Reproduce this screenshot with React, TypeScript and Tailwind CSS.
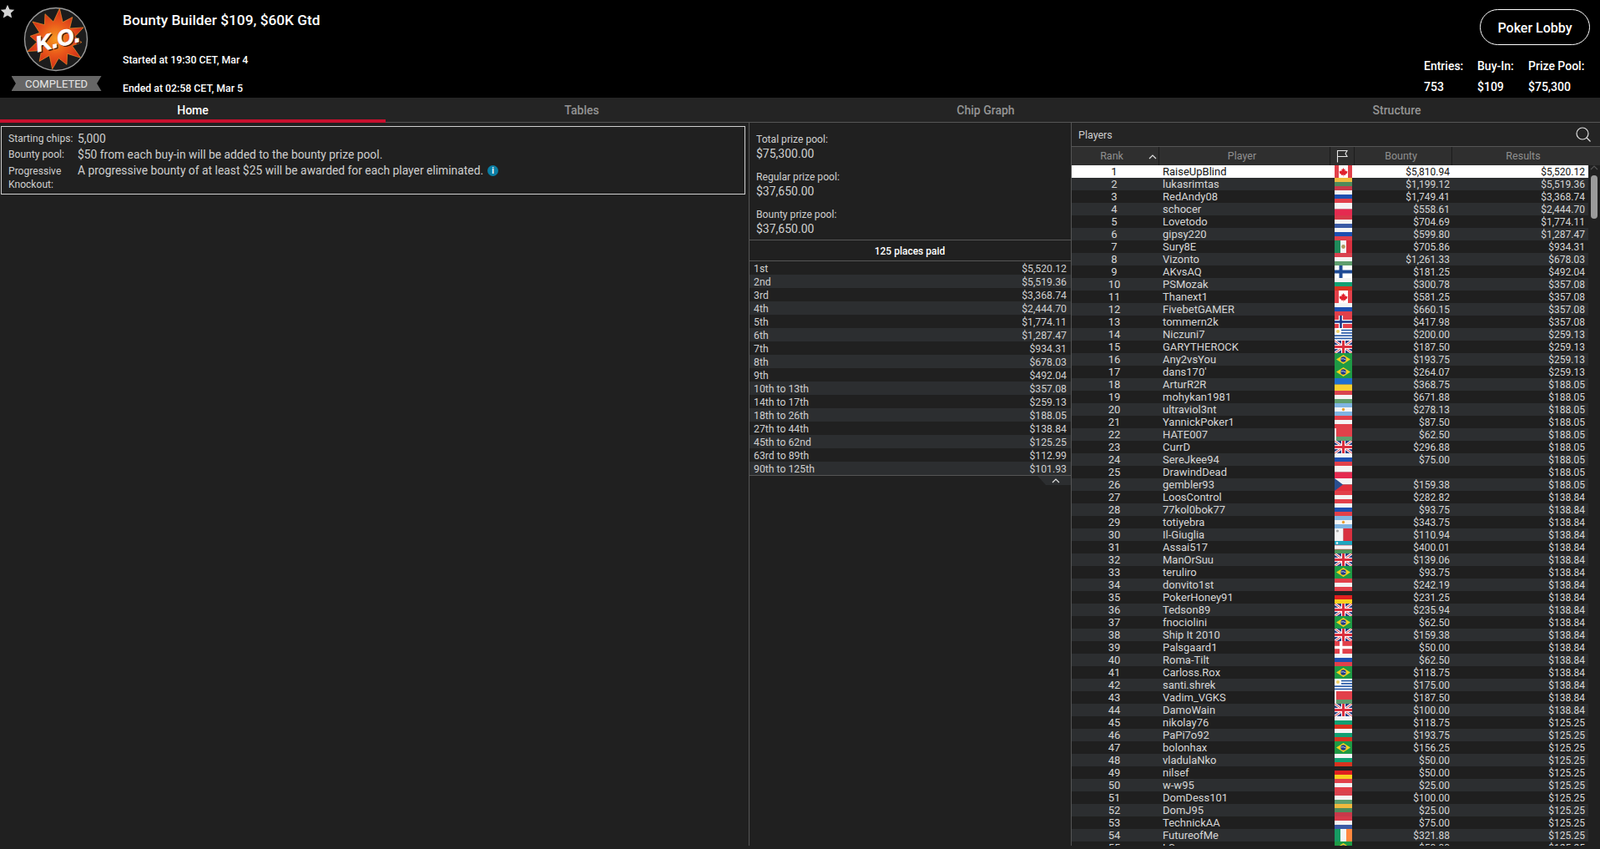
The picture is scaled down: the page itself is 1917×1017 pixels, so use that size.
import React from "react";

type Row = [string, string, string, string];
const rows: Row[] = [
  ["RaiseUpBlind","ca","$5,810.94","$5,520.12"],["lukasrimtas","lt","$1,199.12","$5,519.36"],["RedAndy08","ru","$1,749.41","$3,368.74"],["schocer","pl","$558.61","$2,444.70"],["Lovetodo","nl","$704.69","$1,774.11"],["gipsy220","ru","$599.80","$1,287.47"],["Sury8E","mx","$705.86","$934.31"],["Vizonto","hu","$1,261.33","$678.03"],["AKvsAQ","fi","$181.25","$492.04"],["PSMozak","bg","$300.78","$357.08"],["Thanext1","ca","$581.25","$357.08"],["FivebetGAMER","ru","$660.15","$357.08"],["tommern2k","no","$417.98","$357.08"],["Niczuni7","uy","$200.00","$259.13"],["GARYTHEROCK","gb","$187.50","$259.13"],["Any2vsYou","br","$193.75","$259.13"],["dans170'","br","$264.07","$259.13"],["ArturR2R","ua","$368.75","$188.05"],["mohykan1981","hu","$671.88","$188.05"],["ultraviol3nt","ar","$278.13","$188.05"],["YannickPoker1","at","$87.50","$188.05"],["HATE007","by","$62.50","$188.05"],["CurrD","gb","$296.88","$188.05"],["SereJkee94","ru","$75.00","$188.05"],["DrawindDead","pl","","$188.05"],["gembler93","cz","$159.38","$188.05"],["LoosControl","at","$282.82","$138.84"],["77kol0bok77","ru","$93.75","$138.84"],["totiyebra","ar","$343.75","$138.84"],["Il-Giuglia","mt","$110.94","$138.84"],["Assai517","uz","$400.01","$138.84"],["ManOrSuu","gb","$139.06","$138.84"],["teruliro","br","$93.75","$138.84"],["donvito1st","at","$242.19","$138.84"],["PokerHoney91","de","$231.25","$138.84"],["Tedson89","gb","$235.94","$138.84"],["fnociolini","br","$62.50","$138.84"],["Ship It 2010","gb","$159.38","$138.84"],["Palsgaard1","dk","$50.00","$138.84"],["Roma-Tilt","ru","$62.50","$138.84"],["Carloss.Rox","br","$118.75","$138.84"],["santi.shrek","uy","$175.00","$138.84"],["Vadim_VGKS","by","$187.50","$138.84"],["DamoWain","gb","$100.00","$138.84"],["nikolay76","bg","$118.75","$125.25"],["PaPi7o92","bg","$193.75","$125.25"],["bolonhax","br","$156.25","$125.25"],["vladulaNko","bg","$50.00","$125.25"],["nilsef","de","$50.00","$125.25"],["w-w95","at","$25.00","$125.25"],["DomDess101","hu","$100.00","$125.25"],["DomJ95","lt","$25.00","$125.25"],["TechnickAA","nl","$75.00","$125.25"],["FutureofMe","ie","$321.88","$125.25"],["LS","br","$50.00","$125.25"],
];

const prizes: [string, string][] = [
  ["1st","$5,520.12"],["2nd","$5,519.36"],["3rd","$3,368.74"],["4th","$2,444.70"],["5th","$1,774.11"],["6th","$1,287.47"],["7th","$934.31"],["8th","$678.03"],["9th","$492.04"],["10th to 13th","$357.08"],["14th to 17th","$259.13"],["18th to 26th","$188.05"],["27th to 44th","$138.84"],["45th to 62nd","$125.25"],["63rd to 89th","$112.99"],["90th to 125th","$101.93"],
];

const R = "#e2404a", W = "#f4f4f4", G = "#5f9e6e";

function stripes(colors: string[]) {
  const h = 15 / colors.length;
  return colors.map((c, i) => <rect key={i} x={0} y={i * h} width={21} height={h + 0.2} fill={c} />);
}
function vstripes(colors: string[]) {
  const w = 21 / colors.length;
  return colors.map((c, i) => <rect key={i} x={i * w} y={0} width={w + 0.2} height={15} fill={c} />);
}

function Flag({ c }: { c: string }) {
  let inner: React.ReactNode = null;
  switch (c) {
    case "ca":
      inner = <><rect width="21" height="15" fill="#fff" /><rect width="5" height="15" fill={R} /><rect x="16" width="5" height="15" fill={R} /><path d="M10.5 3l1 2 1.2-.6-.4 2.6 1.4-.8.5 1 1.3-.2-.5 1.6.5.4-2.6 2-.2.9-2-.3v2h-.4v-2l-2 .3-.2-.9-2.6-2 .5-.4-.5-1.6 1.3.2.5-1 1.4.8-.4-2.6 1.2.6z" fill="#e0202c" /></>;
      break;
    case "lt": inner = stripes(["#f0b93e", "#4f8a5b", "#c8394a"]); break;
    case "ru": inner = stripes([W, "#1d4fb0", R]); break;
    case "pl": inner = stripes([W, "#e52a50"]); break;
    case "nl": inner = stripes(["#d63a4a", W, "#3a5aa5"]); break;
    case "hu": inner = stripes(["#d9434f", W, G]); break;
    case "bg": inner = stripes([W, "#11a072", "#d8331f"]); break;
    case "at": inner = stripes([R, W, R]); break;
    case "de": inner = stripes(["#222", "#e02020", "#f8d020"]); break;
    case "ua": inner = stripes(["#1f6fd0", "#f8d030"]); break;
    case "by": inner = <><rect width="21" height="10" fill={R} /><rect y="10" width="21" height="5" fill={G} /><rect width="2" height="15" fill="#eee" /></>; break;
    case "ie": inner = vstripes(["#169b62", "#f4f4f4", "#ff883e"]); break;
    case "mx":
      inner = <>{vstripes(["#1f8a5a", "#f4f4f4", "#d9303f"])}<circle cx="10.5" cy="7.5" r="2.4" fill="#b09a60" /></>;
      break;
    case "fi":
      inner = <><rect width="21" height="15" fill="#fff" /><rect y="5.5" width="21" height="4" fill="#1e4a94" /><rect x="5.5" width="4" height="15" fill="#1e4a94" /></>;
      break;
    case "no":
      inner = <><rect width="21" height="15" fill={R} /><rect y="5" width="21" height="5" fill="#fff" /><rect x="5" width="5" height="15" fill="#fff" /><rect y="6.2" width="21" height="2.6" fill="#1e3a8a" /><rect x="6.2" width="2.6" height="15" fill="#1e3a8a" /></>;
      break;
    case "dk":
      inner = <><rect width="21" height="15" fill={R} /><rect y="5.8" width="21" height="3.4" fill="#fff" /><rect x="6" width="3.4" height="15" fill="#fff" /></>;
      break;
    case "uy":
      inner = <><rect width="21" height="15" fill="#fff" />{[1.7, 5, 8.3, 11.6].map((y) => <rect key={y} x={y < 6 ? 8 : 0} y={y} width={21} height="1.7" fill="#2a5ca8" />)}<circle cx="4" cy="4" r="2" fill="#f0cf60" /></>;
      break;
    case "gb":
      inner = <><rect width="21" height="15" fill="#2a3f85" /><path d="M0 0L21 15M21 0L0 15" stroke="#fff" strokeWidth="3" /><path d="M0 0L21 15M21 0L0 15" stroke="#d9303f" strokeWidth="1" /><rect y="5" width="21" height="5" fill="#fff" /><rect x="8" width="5" height="15" fill="#fff" /><rect y="6" width="21" height="3" fill="#d9303f" /><rect x="9" width="3" height="15" fill="#d9303f" /></>;
      break;
    case "br":
      inner = <><rect width="21" height="15" fill="#1e9a45" /><path d="M10.5 2L19 7.5 10.5 13 2 7.5z" fill="#f4d020" /><circle cx="10.5" cy="7.5" r="3.2" fill="#1e3a8a" /><path d="M7.5 7q3-1 6 1" stroke="#fff" strokeWidth="0.7" fill="none" /></>;
      break;
    case "ar":
      inner = <>{stripes(["#7fb4e2", W, "#7fb4e2"])}<circle cx="10.5" cy="7.5" r="1.7" fill="#e8a030" /></>;
      break;
    case "cz":
      inner = <><rect width="21" height="7.5" fill={W} /><rect y="7.5" width="21" height="7.5" fill="#e2303c" /><path d="M0 0L10 7.5 0 15z" fill="#2a4f8f" /></>;
      break;
    case "mt":
      inner = <>{vstripes([W, "#d9303f"])}<circle cx="3.5" cy="3" r="1.6" fill="#aaa" /></>;
      break;
    case "uz":
      inner = <>{stripes(["#1ea6c0", W, "#4f9a5e"])}<circle cx="3" cy="2.5" r="1.2" fill="#fff" /><rect y="4.8" width="21" height="0.5" fill="#d9303f" /><rect y="9.8" width="21" height="0.5" fill="#d9303f" /></>;
      break;
  }
  return <svg width="21" height="15" viewBox="0 0 21 15" className="block">{inner}</svg>;
}

function Logo() {
  const pts: string[] = [];
  const spikes = [37, 22, 33, 21, 36, 23, 31, 21, 37, 22, 33, 23, 36, 21, 33, 22, 37, 23, 31, 21, 35, 22, 33, 21];
  spikes.forEach((r, i) => {
    const a = (i / spikes.length) * Math.PI * 2 - Math.PI / 2 + 0.12;
    pts.push(`${(39 + r * Math.cos(a)).toFixed(1)},${(39 + r * Math.sin(a)).toFixed(1)}`);
  });
  return (
    <svg width="78" height="78" viewBox="0 0 78 78" className="block">
      <defs>
        <radialGradient id="burst">
          <stop offset="0%" stopColor="#f59a20" />
          <stop offset="50%" stopColor="#ea5a1a" />
          <stop offset="100%" stopColor="#d02c18" />
        </radialGradient>
      </defs>
      <circle cx="39" cy="39" r="37.5" fill="#1c1c1c" stroke="#9a9a9a" strokeWidth="1.4" />
      <polygon points={pts.join(" ")} fill="url(#burst)" stroke="#f0902a" strokeWidth="0.7" />
      <g transform="rotate(-14 41 39)" fontFamily="Liberation Sans, sans-serif" fontSize="26" fontWeight="700" fontStyle="italic" textAnchor="middle">
        <text x="42" y="49.5" fill="#3a1208" stroke="#3a1208" strokeWidth="0.9">K.O.</text>
        <text x="41" y="48" fill="#fff" stroke="#fff" strokeWidth="0.9">K.O.</text>
      </g>
    </svg>
  );
}

function Chevron({ up, cls }: { up: boolean; cls: string }) {
  return (
    <svg width="10" height="6" viewBox="0 0 10 6" className={cls}>
      <path d={up ? "M1 5l4-4 4 4" : "M1 1l4 4 4-4"} fill="none" stroke="currentColor" strokeWidth="1.2" />
    </svg>
  );
}

export default function App() {
  return (
    <div className="w-[1917px] h-[1017px] overflow-hidden flex flex-col bg-[#202020] text-[#d8d8d8] font-[family-name:Roboto,sans-serif]">
      <header className="relative h-[117px] shrink-0 bg-black flex">
        <svg width="18" height="18" viewBox="0 0 24 24" className="absolute left-0 top-[5px]">
          <path d="M12 1l3.3 7.3 7.7.8-5.8 5.2 1.7 7.7L12 18l-6.9 4 1.7-7.7L1 9.1l7.7-.8z" fill="#d4d4d4" />
        </svg>
        <div className="w-[147px] shrink-0 flex flex-col items-center">
          <div className="mt-[8px] ml-[-14px]"><Logo /></div>
          <div className="mt-[5px] ml-[-12px] w-[108px] h-[18px] bg-[#666666] flex items-center justify-center text-[13px] leading-none text-[#e6e6e6] [clip-path:polygon(0_100%,5%_50%,0_0,100%_0,95%_50%,100%_100%)]">COMPLETED</div>
        </div>
        <div className="flex-1 flex flex-col text-white">
          <div className="h-[48px] pt-[14px] text-[17.3px] leading-[20px] font-medium">Bounty Builder $109, $60K Gtd</div>
          <div className="h-[34px] pt-[16px] text-[12.3px] leading-[16px] font-medium">Started at 19:30 CET, Mar 4</div>
          <div className="pt-[16px] text-[12.3px] leading-[16px] font-medium">Ended at 02:58 CET, Mar 5</div>
        </div>
        <div className="w-[211px] shrink-0 flex flex-col text-white relative">
          <button className="mt-[11px] ml-[67px] w-[132px] h-[43px] rounded-full border border-white text-[16px] font-medium leading-none pt-[3px]">Poker Lobby</button>
          <div className="mt-[17px] flex text-[14px] leading-[16px] font-medium">
            <div className="w-[64px]">Entries:</div>
            <div className="w-[61px]">Buy-In:</div>
            <div>Prize Pool:</div>
          </div>
          <div className="mt-[9px] flex text-[14px] leading-[16px] font-medium">
            <div className="w-[64px]">753</div>
            <div className="w-[61px]">$109</div>
            <div>$75,300</div>
          </div>
        </div>
      </header>

      <nav className="h-[30px] shrink-0 flex bg-[#242424] border-b border-[#555555] text-[14px] font-medium leading-none text-[#949494]">
        <div className="w-[462px] h-[30px] border-b-[4px] border-[#c8102e] text-white flex items-center justify-center pt-[4px]">Home</div>
        <div className="w-[470px] flex items-center justify-center">Tables</div>
        <div className="w-[498px] flex items-center justify-center">Chip Graph</div>
        <div className="w-[487px] flex items-center justify-center">Structure</div>
      </nav>

      <main className="flex-1 min-h-0 flex">
        <section className="w-[897px] shrink-0 pt-[4px] pl-[1px] pr-[4px]">
          <div className="border border-[#d0d0d0] h-[82px] pl-[8px] pt-[5px] text-[#cfcfcf] grid grid-cols-[83px_1fr] auto-rows-min">
            <div className="text-[12.1px] leading-[19px] whitespace-nowrap">Starting chips:</div>
            <div className="text-[13.85px] leading-[19px]">5,000</div>
            <div className="text-[12.1px] leading-[19px] whitespace-nowrap">Bounty pool:</div>
            <div className="text-[13.85px] leading-[19px]">$50 from each buy-in will be added to the bounty prize pool.</div>
            <div className="text-[12.1px] leading-[16px] pt-[2px]">Progressive<br />Knockout:</div>
            <div className="text-[13.85px] leading-[19px] flex items-start">
              <span>A progressive bounty of at least $25 will be awarded for each player eliminated.</span>
              <span className="ml-[5px] mt-[3px] w-[13px] h-[13px] rounded-full bg-[#0a7ea4] text-white text-[10px] leading-[13px] text-center font-bold">i</span>
            </div>
          </div>
        </section>

        <section className="w-[386px] shrink-0 border-l border-[#555555] flex flex-col h-[866px]">
          <div className="h-[140px] shrink-0 pl-[8px] pt-[11px] text-[#cfcfcf]">
            <div className="h-[45px]"><div className="text-[12.15px] leading-[18px]">Total prize pool:</div><div className="text-[14px] leading-[16px]">$75,300.00</div></div>
            <div className="h-[45px]"><div className="text-[12.15px] leading-[18px]">Regular prize pool:</div><div className="text-[14px] leading-[16px]">$37,650.00</div></div>
            <div className="h-[45px]"><div className="text-[12.15px] leading-[18px]">Bounty prize pool:</div><div className="text-[14px] leading-[16px]">$37,650.00</div></div>
          </div>
          <div className="h-[26px] shrink-0 border-y border-[#555555] flex items-center justify-center pt-[2px] pr-[1px] text-[12px] font-medium text-white">125 places paid</div>
          <div className="shrink-0 border-b border-[#555555]">
            {prizes.map(([p, v], i) => (
              <div key={p} className={`h-[16px] flex justify-between pl-[5px] pr-[5px] pt-[2px] text-[12.25px] leading-[14px] text-[#cfcfcf] ${i % 2 ? "bg-[#2c2e30]" : ""}`}>
                <span>{p}</span><span>{v}</span>
              </div>
            ))}
          </div>
          <div className="relative h-[11px] shrink-0">
            <div className="absolute right-0 top-0 w-[40px] h-[11px] bg-[#2c2e30] [clip-path:polygon(0_0,100%_0,100%_100%,25%_100%)] flex items-center justify-end pr-[13px] text-[#e0e0e0]">
              <Chevron up cls="block" />
            </div>
          </div>
        </section>

        <section className="flex-1 min-w-0 border-l border-[#555555] h-[866px] flex flex-col overflow-hidden">
          <div className="h-[29px] shrink-0 border-b border-[#555555] flex items-center justify-between pl-[8px] pr-[10px] text-[12.5px] text-[#cfcfcf] bg-[#242424]">
            <span className="pt-[2px]">Players</span>
            <svg width="20" height="20" viewBox="0 0 20 20" fill="none" stroke="#e0e0e0" strokeWidth="1.2"><circle cx="9" cy="9" r="7" /><path d="M14 14l4.5 4.5" /></svg>
          </div>
          <div className="h-[22px] shrink-0 flex bg-[#2f2f2f] text-[12.5px] leading-[22px] text-[#8f8f8f] text-center">
            <div className="w-[105px] relative border-r border-[#1c1c1c] pr-[8px]">Rank<Chevron up cls="absolute right-[2px] top-[9px] text-[#e0e0e0]" /></div>
            <div className="w-[205px] border-r border-[#1c1c1c] pr-[6px]">Player</div>
            <div className="w-[29px] border-r border-[#1c1c1c] flex items-center justify-center">
              <svg width="14" height="16" viewBox="0 0 14 16" fill="none" stroke="#e8e8e8" strokeWidth="1.1"><path d="M1.5 15.5V1.5h11.5l-2 3.5 2 3.5H1.5" /></svg>
            </div>
            <div className="w-[117px] border-r border-[#1c1c1c] pr-[5px]">Bounty</div>
            <div className="flex-1 pr-[7px]">Results</div>
          </div>
          <div className="relative flex-1 min-h-0 overflow-hidden">
            <div className="w-[620px]">
              {rows.map(([name, flag, bounty, result], i) => {
                const sel = i === 0;
                return (
                  <div key={i} className={`h-[15px] flex leading-[15px] font-[family-name:'Liberation_Sans',sans-serif] ${sel ? "bg-white text-[#111111]" : i % 2 ? "bg-[#2c2e30] text-[#d6d6d6]" : "bg-[#1f1f1f] text-[#d6d6d6]"}`}>
                    <div className="w-[102px] text-center text-[13px]">{i + 1}</div>
                    <div className="w-[209px] pl-[7px] text-[13px] whitespace-nowrap">{name}</div>
                    <div className="w-[4px]" />
                    <Flag c={flag} />
                    <div className="w-[117px] text-right text-[12px] leading-[16px]">{bounty}</div>
                    <div className="w-[162px] text-right text-[12px] leading-[16px]">{result}</div>
                  </div>
                );
              })}
            </div>
            <div className="absolute right-0 top-0 bottom-0 w-[14px] bg-[#202020] flex flex-col items-center">
              <Chevron up cls="mt-[0px] text-[#555555]" />
              <div className="mt-[6px] w-[8px] h-[52px] rounded-[4px] bg-[#9a9a9a]" />
            </div>
          </div>
        </section>
      </main>
    </div>
  );
}
